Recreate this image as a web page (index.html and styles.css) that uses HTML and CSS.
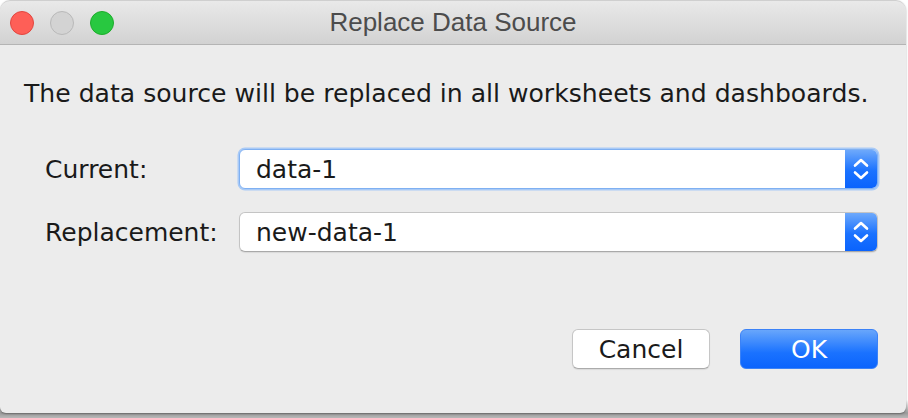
FILE: index.html
```html
<!DOCTYPE html>
<html>
<head>
<meta charset="utf-8">
<link rel="stylesheet" href="styles.css">
</head>
<body>
<div class="window">
  <div class="titlebar">
    <div class="lights">
      <span class="light red"></span>
      <span class="light gray"></span>
      <span class="light green"></span>
    </div>
    <div class="title">Replace Data Source</div>
  </div>
  <div class="content">
    <p class="message">The data source will be replaced in all worksheets and dashboards.</p>
    <div class="form">
      <div class="row">
        <label class="label">Current:</label>
        <div class="combo focused">
          <span class="value">data-1</span>
          <span class="stepper"><svg width="20" height="26" viewBox="0 0 20 26"><path d="M4 9.5 L10 4 L16 9.5 M4 16.5 L10 22 L16 16.5" fill="none" stroke="#fff" stroke-width="2.6" stroke-linecap="round" stroke-linejoin="round"/></svg></span>
        </div>
      </div>
      <div class="row">
        <label class="label">Replacement:</label>
        <div class="combo">
          <span class="value">new-data-1</span>
          <span class="stepper"><svg width="20" height="26" viewBox="0 0 20 26"><path d="M4 9.5 L10 4 L16 9.5 M4 16.5 L10 22 L16 16.5" fill="none" stroke="#fff" stroke-width="2.6" stroke-linecap="round" stroke-linejoin="round"/></svg></span>
        </div>
      </div>
    </div>
    <div class="buttons">
      <button class="btn cancel">Cancel</button>
      <button class="btn ok">OK</button>
    </div>
  </div>
</div>
</body>
</html>
```
FILE: styles.css
```css
html, body {
  margin: 0;
  padding: 0;
}
body {
  width: 908px;
  height: 418px;
  background: linear-gradient(to bottom, #ffffff 0, #ffffff 400px, #9a9a9a 413px, #b8b8b8 418px);
  overflow: hidden;
  font-family: "DejaVu Sans", "Liberation Sans", sans-serif;
}
.window {
  width: 906px;
  height: 413px;
  background: #ececec;
  border-radius: 10px 10px 6px 6px;
  box-shadow: 0 1px 2px rgba(0,0,0,0.35);
  overflow: hidden;
  display: flex;
  flex-direction: column;
}
.titlebar {
  height: 43px;
  border-top: 1px solid #cfcfcf;
  border-bottom: 1px solid #b4b4b4;
  background: linear-gradient(to bottom, #e9e9e9, #d2d2d2);
  border-radius: 10px 10px 0 0;
  display: flex;
  align-items: center;
  position: relative;
}
.lights {
  display: flex;
  gap: 16px;
  padding-left: 10px;
}
.light {
  width: 22px;
  height: 22px;
  border-radius: 50%;
  display: block;
}
.red { background: #fe5f57; border: 1px solid #e2463f; }
.gray { background: #d3d3d3; border: 1px solid #b9b9b9; }
.green { background: #28c840; border: 1px solid #1dad2b; }
.title {
  position: absolute;
  left: 0;
  right: 0;
  top: 0;
  bottom: 0;
  display: flex;
  align-items: center;
  justify-content: center;
  font-family: "Liberation Sans", Arial, sans-serif;
  font-size: 26px;
  color: #4c4c4c;
  pointer-events: none;
}
.content {
  flex: 1;
  display: flex;
  flex-direction: column;
  padding: 0 28px 0 24px;
}
.message {
  margin: 34px 0 0;
  font-size: 25.1px;
  line-height: 30px;
  color: #1a1a1a;
  letter-spacing: 0;
}
.form {
  margin-top: 40px;
  display: flex;
  flex-direction: column;
  gap: 23px;
  padding-left: 21px;
}
.row {
  display: flex;
  align-items: center;
}
.label {
  width: 194px;
  font-size: 25px;
  color: #1a1a1a;
}
.combo {
  flex: 1;
  height: 38px;
  background: #fff;
  border: 1px solid #c4c4c4;
  border-bottom-color: #a9a9a9;
  border-radius: 6px;
  display: flex;
  align-items: center;
  box-shadow: 0 1px 1px rgba(0,0,0,0.08);
  overflow: hidden;
}
.combo.focused {
  border-color: #7fb0f2;
  box-shadow: 0 0 0 1.5px #a9caf6;
}
.value {
  flex: 1;
  padding-left: 16px;
  font-size: 25px;
  color: #1a1a1a;
}
.stepper {
  width: 32px;
  align-self: stretch;
  background: linear-gradient(to bottom, #6ea9fb, #1a72ff 55%, #0a63fd);
  display: flex;
  align-items: center;
  justify-content: center;
}
.buttons {
  margin-top: 77px;
  display: flex;
  justify-content: flex-end;
  gap: 30px;
}
.btn {
  width: 138px;
  height: 40px;
  border-radius: 6px;
  font-family: "DejaVu Sans", "Liberation Sans", sans-serif;
  font-size: 25px;
  padding: 0;
}
.cancel {
  background: #fff;
  color: #1a1a1a;
  border: 1px solid #c6c6c6;
  border-bottom-color: #ababab;
  box-shadow: 0 1px 1px rgba(0,0,0,0.08);
}
.ok {
  background: linear-gradient(to bottom, #68a6fb, #1a72ff 60%, #0b64fd);
  color: #fff;
  border: 1px solid #3b82f7;
}
```
